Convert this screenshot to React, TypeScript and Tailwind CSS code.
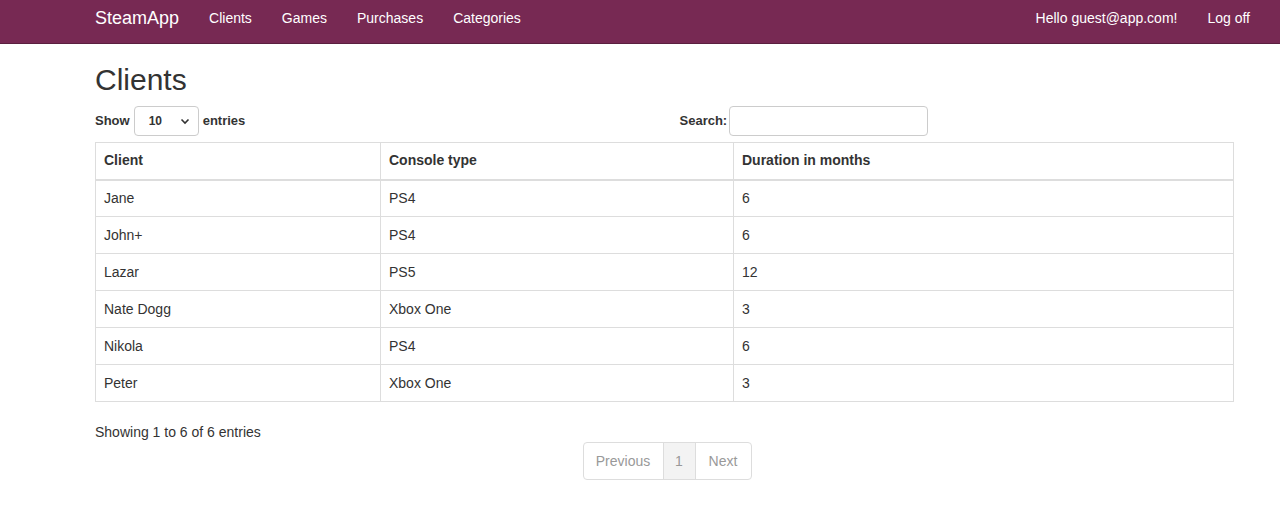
import React from 'react';

const clients = [
  { name: 'Jane', console: 'PS4', months: 6 },
  { name: 'John+', console: 'PS4', months: 6 },
  { name: 'Lazar', console: 'PS5', months: 12 },
  { name: 'Nate Dogg', console: 'Xbox One', months: 3 },
  { name: 'Nikola', console: 'PS4', months: 6 },
  { name: 'Peter', console: 'Xbox One', months: 3 },
];

const navLinks = ['Clients', 'Games', 'Purchases', 'Categories'];

const App: React.FC = () => {
  return (
    <div className="min-h-[506px] bg-white text-[#333] font-['Liberation_Sans',Arial,sans-serif] text-[14px]">
      {/* Navbar */}
      <nav className="h-[44px] bg-[#772953] border-b border-[#5a1f3f] flex items-center pb-[8px] pl-[80px] pr-[15px] text-white">
        <a className="px-[15px] text-[18px] leading-[20px]">SteamApp</a>
        {navLinks.map(link => (
          <a key={link} className="px-[15px] leading-[20px]">{link}</a>
        ))}
        <div className="ml-auto flex items-center">
          <a className="px-[15px] leading-[20px]">Hello guest@app.com!</a>
          <a className="px-[15px] leading-[20px]">Log off</a>
        </div>
      </nav>

      {/* Content */}
      <main className="ml-[95px] w-[1139px]">
        <h2 className="mt-[19px] mb-[10px] text-[30px] leading-[33px]">Clients</h2>

        <div className="grid grid-cols-2 h-[30px]">
          <div className="flex items-center gap-[4px] font-bold text-[13px]">
            <span>Show</span>
            <div className="w-[65px] h-[30px] border border-[#ccc] rounded-[4px] flex items-center justify-between pl-[14px] pr-[8px] text-[12px]">
              <span>10</span>
              <svg width="10" height="10" viewBox="0 0 10 10" fill="none" stroke="#333" strokeWidth="1.6">
                <path d="M1.5 3.5 L5 7 L8.5 3.5" />
              </svg>
            </div>
            <span>entries</span>
          </div>
          <div className="flex items-center pl-[15px] font-bold text-[13px]">
            <span className="pr-[2px]">Search:</span>
            <div className="w-[199px] h-[30px] border border-[#ccc] rounded-[4px]" />
          </div>
        </div>

        <table className="mt-[6px] w-full border-collapse border border-[#ddd] table-fixed">
          <colgroup>
            <col className="w-[285px]" />
            <col className="w-[353px]" />
            <col />
          </colgroup>
          <thead>
            <tr className="border-b-2 border-[#ddd]">
              <th className="text-left font-bold px-[8px] h-[37px] border-r border-[#ddd]">Client</th>
              <th className="text-left font-bold px-[8px] h-[37px] border-r border-[#ddd]">Console type</th>
              <th className="text-left font-bold px-[8px] h-[37px]">Duration in months</th>
            </tr>
          </thead>
          <tbody>
            {clients.map(c => (
              <tr key={c.name} className="border-b border-[#ddd]">
                <td className="px-[8px] h-[37px] border-r border-[#ddd]">{c.name}</td>
                <td className="px-[8px] h-[37px] border-r border-[#ddd]">{c.console}</td>
                <td className="px-[8px] h-[37px]">{c.months}</td>
              </tr>
            ))}
          </tbody>
        </table>

        <div className="mt-[20px] leading-[20px]">Showing 1 to 6 of 6 entries</div>

        <div className="flex justify-center pl-[5px]">
          <div className="flex h-[38px] border border-[#ddd] rounded-[4px] text-[#999] overflow-hidden">
            <span className="w-[79px] flex items-center justify-center">Previous</span>
            <span className="w-[33px] flex items-center justify-center bg-[#f3f3f3] border-x border-[#ddd]">1</span>
            <span className="w-[55px] flex items-center justify-center">Next</span>
          </div>
        </div>
      </main>
    </div>
  );
};

export default App;
